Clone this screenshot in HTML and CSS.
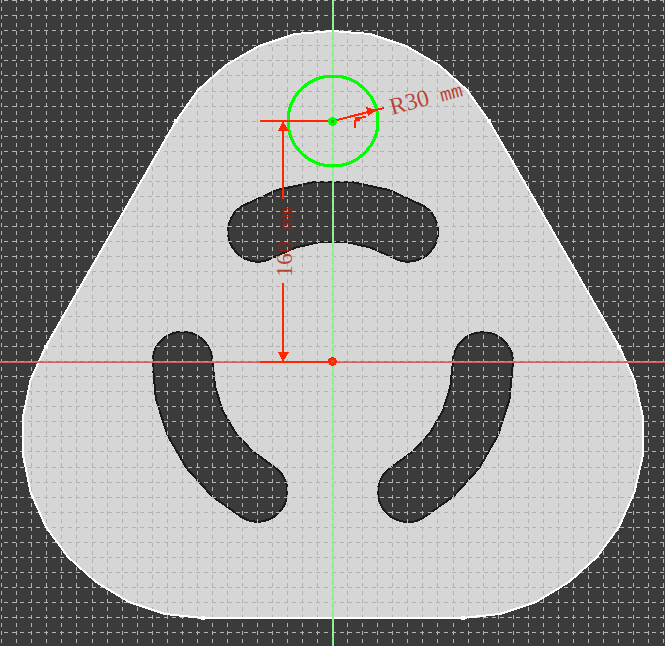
FILE: index.html
```html
<!DOCTYPE html>
<html lang="en">
<head>
<meta charset="utf-8">
<title>Sketch view</title>
<link rel="stylesheet" href="styles.css">
</head>
<body>
<main class="viewport">
<svg class="sketch" viewBox="0 0 665 646" role="img" aria-label="Part sketch with dimensions">
  <defs>
    <path id="slot" d="M243 205.6L277 190L314 182H352L389 190L423 205.6A30 30 0 0 1 393 257.6L370 247.4L346 242H320L296 247.4L273 257.6A30 30 0 0 1 243 205.6Z"/>
  </defs>

  <!-- Part face and its slots -->
  <path class="face" d="M202.5 618L165 614L129 602L96 582L68 557L46 527L30.5 492L23 455V417L30.5 380L46 346L176 121L198 90L226 65L259 46L295 34L332.500 31L370 34L406 46L439 65L467 90L489 121L619 346L634.500 380L643 417V455L634.500 492L619 527L597 557L569 582L536 602L500 614L462.500 618Z"/>
  <g class="slots">
    <use href="#slot"/>
    <use href="#slot" transform="rotate(120 332.800 361.800)"/>
    <use href="#slot" transform="rotate(240 332.800 361.800)"/>
  </g>

  <g class="grid" id="grid"></g>
  <path class="edge" d="M202.5 618L165 614L129 602L96 582L68 557L46 527L30.5 492L23 455V417L30.5 380L46 346L176 121L198 90L226 65L259 46L295 34L332.500 31L370 34L406 46L439 65L467 90L489 121L619 346L634.500 380L643 417V455L634.500 492L619 527L597 557L569 582L536 602L500 614L462.500 618Z"/>
  <path class="vertices" d="M174 119h4v4h-4zM487 119h4v4h-4zM44 345h4v4h-4zM617 345h4v4h-4zM201 616h4v4h-4zM461 616h4v4h-4z"/>

  <!-- Axes, with the grid dashes showing through -->
  <path class="axis-x" d="M0 362H665"/>
  <path class="axis-y" d="M333 0V646"/>
  <path class="axis-dash" d="M0 361.500H665M332.500 0V646"/>

  <!-- Sketch circle -->
  <circle class="circle" cx="333" cy="121" r="45"/>

  <!-- Dimensions -->
  <g class="dimension">
    <path d="M260 121H332M260 362H332M283 128V199M283 283V355"/>
    <path d="M333 121L384 108"/>
    <path d="M355 128V120M355 120L358 118L366 117"/>
  </g>
  <g class="arrows">
    <path d="M283 121L289 131H278ZM283 362L278 352H289ZM377 110L368 116L366 107Z"/>
    <circle cx="357.500" cy="119" r="2.500"/>
  </g>
  <circle class="point" cx="332.500" cy="121.500" r="3"/>
  <circle class="point origin" cx="332.500" cy="361.500" r="3"/>

  <text class="label" transform="translate(292 277) rotate(-90)">160<tspan class="unit" xml:space="preserve"> mm</tspan></text>
  <text class="label" transform="translate(392 115) rotate(-15)">R30<tspan class="unit" xml:space="preserve"> mm</tspan></text>
</svg>
</main>
<script src="grid.js"></script>
</body>
</html>
```
FILE: styles.css
```css
html,
body {
  height: 100%;
  margin: 0;
}

body {
  background: #3b3b3b;
}

.viewport {
  height: 100%;
  overflow: hidden;
}

.sketch {
  display: block;
  width: 100%;
  height: 100%;
  shape-rendering: crispEdges;
}

.face {
  fill: #d6d6d6;
}

.slots {
  fill: #3b3b3b;
  stroke: #1a1a1a;
  stroke-width: 2;
}

.grid {
  stroke: #b3b3b3;
  stroke-width: 1;
  stroke-dasharray: 4 4;
}

.edge {
  fill: none;
  stroke: #fff;
  stroke-width: 2;
}

.vertices {
  fill: #fff;
}

.axis-x {
  stroke: #d46464;
  stroke-width: 2;
}

.axis-y {
  stroke: #80ff80;
  stroke-width: 2;
}

.axis-dash {
  stroke: #b3b3b3;
  stroke-opacity: 0.5;
  stroke-width: 1;
  stroke-dasharray: 4 4;
  stroke-dashoffset: 4;
}

.circle {
  fill: none;
  stroke: #00ff00;
  stroke-width: 3;
}

.dimension {
  fill: none;
  stroke: #ff2600;
  stroke-width: 2;
}

.arrows {
  fill: #ff2600;
}

.point {
  fill: #40b000;
  stroke: #00ff00;
  stroke-width: 3;
}

.origin {
  fill: #d05030;
  stroke: #ff2600;
}

.label {
  fill: #b01400;
  fill-opacity: 0.75;
  font-family: "Liberation Serif", serif;
  font-size: 24px;
}

.unit {
  font-family: "Liberation Mono", monospace;
  font-size: 19px;
}
```
FILE: grid.js
```js
const grid = document.getElementById("grid");
const spacing = 15.04;

function addLine(d, offset) {
  const line = document.createElementNS("http://www.w3.org/2000/svg", "path");
  line.setAttribute("d", d);
  line.setAttribute("stroke-dashoffset", offset);
  grid.append(line);
}

for (let i = 0; i < 45; i++) {
  const x = Math.floor(1.8 + i * spacing) + 0.5;
  addLine(`M${x} 0V646`, 1);
}

for (let i = 0; i < 43; i++) {
  const y = Math.floor(0.77 + i * spacing) + 0.5;
  addLine(`M0 ${y}H665`, 4);
}
```
